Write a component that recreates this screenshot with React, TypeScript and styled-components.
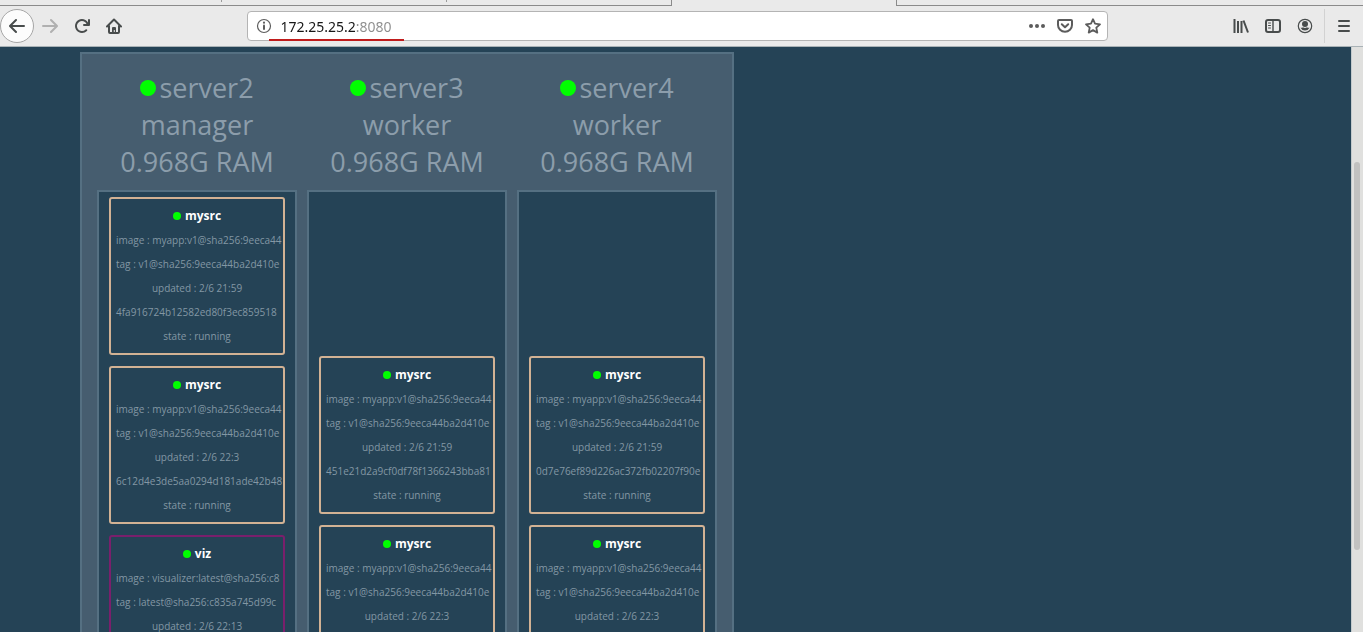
import React from 'react';
import styled, { createGlobalStyle } from 'styled-components';

const GlobalStyle = createGlobalStyle`
  *, *::before, *::after { box-sizing: border-box; }
  body { margin: 0; font-family: "Open Sans", "Noto Sans", sans-serif; }
`;

const Window = styled.div`
  display: flex;
  flex-direction: column;
  height: 100vh;
  overflow: hidden;
  background: #254356;
`;

const TabStrip = styled.div`
  display: flex;
  flex: none;
  height: 6px;
  background: #eaeaea;
`;

const Tab = styled.div<{ $active?: boolean; $last?: boolean }>`
  width: ${p => (p.$last ? 'auto' : p.$active ? '224px' : '225px')};
  flex: ${p => (p.$last ? '1' : 'none')};
  border-bottom: 1px solid ${p => (p.$active ? '#eaeaea' : '#8b8b8b')};
  border-left: ${p => (p.$last ? '1px solid #8b8b8b' : '0')};

  &:first-child { width: 222px; }
  &:nth-child(3) { border-right: 1px solid #8b8b8b; }
`;

const TabDivider = styled.div`
  width: 1px;
  height: 2px;
  margin-left: auto;
  background: #9b9b9b;
`;

const Toolbar = styled.nav`
  display: flex;
  flex: none;
  align-items: center;
  height: 41px;
  background: #eaeaea;
  border-bottom: 1px solid #a9b2b6;
`;

const ButtonGroup = styled.div`
  display: flex;
  flex: none;
  align-items: center;
`;

const ToolButton = styled.button<{ $muted?: boolean; $round?: boolean }>`
  display: flex;
  align-items: center;
  justify-content: center;
  width: ${p => (p.$round ? '34px' : '32px')};
  height: ${p => (p.$round ? '34px' : '32px')};
  padding: 0;
  border: ${p => (p.$round ? '1px solid #a6a6a6' : '0')};
  border-radius: ${p => (p.$round ? '50%' : '3px')};
  background: ${p => (p.$round ? '#fcfcfc' : 'transparent')};
  color: ${p => (p.$muted ? '#b0b0b0' : '#484c4c')};
`;

const Spacer = styled.div`
  flex: 119;
`;

const AddressBar = styled.div`
  position: relative;
  display: flex;
  flex: 861;
  align-items: center;
  height: 30px;
  padding: 0 0 0 8px;
  background: #fff;
  border: 1px solid #b4b4b4;
  border-radius: 4px;
  color: #5c5c5c;
`;

const AddressInput = styled.input`
  flex: 1;
  min-width: 0;
  height: 24px;
  margin-left: 8px;
  padding: 0;
  border: 0;
  outline: 0;
  font: 14px "Noto Sans", "Open Sans", sans-serif;
  color: transparent;
  background: linear-gradient(to right, #161616 76px, #8c8c8c 76px);
  background-clip: text;
  -webkit-background-clip: text;
`;

const AddressMark = styled.div`
  position: absolute;
  left: 21px;
  bottom: -1px;
  width: 135px;
  height: 2px;
  background: #c01c1c;
`;

const AddressButton = styled(ToolButton)`
  width: 28px;
  height: 28px;
  color: #5c5c5c;
`;

const InfoButton = styled(AddressButton)`
  width: 16px;
`;

const Divider = styled.div`
  width: 1px;
  height: 34px;
  margin: 0 3px;
  background: #d2d2d2;
`;

const MenuGroup = styled(ButtonGroup)`
  padding-right: 3px;
`;

const Viewport = styled.div`
  display: flex;
  flex: 1;
  min-height: 0;
`;

const Page = styled.main`
  flex: 1;
  min-width: 0;
  overflow: hidden;
  padding: 5px 80px 0;
`;

const ScrollTrack = styled.div`
  flex: none;
  width: 12px;
  padding: 0 3px 0 2px;
  background: #e0e0de;
  border-left: 1px solid #c3cacc;
  display: flex;
  flex-direction: column;
`;

const ScrollSpace = styled.div<{ $share: number }>`
  flex: ${p => p.$share};
`;

const ScrollThumb = styled.div`
  flex: 388;
  width: 6px;
  border-radius: 3px;
  background: #c1c1c0;
`;

const Cluster = styled.section`
  display: flex;
  gap: 10px;
  width: fit-content;
  padding: 15px;
  background: #465d6f;
  border: 2px solid #557082;
`;

const Node = styled.article`
  display: flex;
  flex-direction: column;
  width: 200px;
`;

const NodeHeader = styled.header`
  margin-bottom: 10px;
  text-align: center;
  font-size: 27px;
  line-height: 37px;
  color: #8c9dab;
`;

const NodeLine = styled.div`
  display: flex;
  align-items: center;
  justify-content: center;
  gap: 3px;
`;

const Dot = styled.span<{ $size: number }>`
  flex: none;
  width: ${p => p.$size}px;
  height: ${p => p.$size}px;
  border-radius: 50%;
  background: #00ff00;
`;

const TaskList = styled.div`
  display: flex;
  flex: 1;
  flex-direction: column;
  justify-content: flex-end;
  gap: 11px;
  padding: 5px 10px;
  background: #254356;
  border: 2px solid #557082;
`;

const Task = styled.div<{ $viz: boolean }>`
  height: ${p => (p.$viz ? '148px' : '158px')};
  padding: 7px;
  overflow: hidden;
  border-radius: 3px;
  box-shadow: inset 0 0 0 2px ${p => (p.$viz ? '#7a1f6c' : '#d2b294')};
  font-size: 10px;
  line-height: 24px;
  text-align: center;
  white-space: nowrap;
  color: #8397a4;
`;

const TaskName = styled.div`
  display: flex;
  align-items: center;
  justify-content: center;
  gap: 4px;
  font-size: 12px;
  font-weight: 700;
  color: #fff;
`;

const LongLine = styled.div`
  text-align: left;
`;

type TaskInfo = {
  name: string;
  image: string;
  tag: string;
  updated: string;
  id: string;
};

const mysrc = (updated: string, id: string): TaskInfo => ({
  name: 'mysrc',
  image: 'myapp:v1@sha256:9eeca44',
  tag: 'v1@sha256:9eeca44ba2d410e',
  updated,
  id,
});

const nodes: { name: string; role: string; tasks: TaskInfo[] }[] = [
  {
    name: 'server2',
    role: 'manager',
    tasks: [
      mysrc('2/6 21:59', '4fa916724b12582ed80f3ec859518'),
      mysrc('2/6 22:3', '6c12d4e3de5aa0294d181ade42b48'),
      {
        name: 'viz',
        image: 'visualizer:latest@sha256:c8',
        tag: 'latest@sha256:c835a745d99c',
        updated: '2/6 22:13',
        id: '',
      },
    ],
  },
  {
    name: 'server3',
    role: 'worker',
    tasks: [
      mysrc('2/6 21:59', '451e21d2a9cf0df78f1366243bba81'),
      mysrc('2/6 22:3', ''),
    ],
  },
  {
    name: 'server4',
    role: 'worker',
    tasks: [
      mysrc('2/6 21:59', '0d7e76ef89d226ac372fb02207f90e'),
      mysrc('2/6 22:3', ''),
    ],
  },
];

const Icon = ({ children }: { children: React.ReactNode }) => (
  <svg width="16" height="16" viewBox="0 0 16 16" fill="none" stroke="currentColor" strokeWidth="2" strokeLinecap="round" strokeLinejoin="round" aria-hidden="true">
    {children}
  </svg>
);

export default function App() {
  return (
    <>
      <GlobalStyle />
      <Window>
        <TabStrip>
          <Tab><TabDivider /></Tab>
          <Tab><TabDivider /></Tab>
          <Tab />
          <Tab $active />
          <Tab $last />
        </TabStrip>
        <Toolbar>
          <ButtonGroup>
            <ToolButton $round aria-label="Back">
              <Icon><path d="M15 8H1.5M7 2L1 8l6 6" /></Icon>
            </ToolButton>
            <ToolButton $muted aria-label="Forward">
              <Icon><path d="M1 8h13.500M9 2l6 6-6 6" /></Icon>
            </ToolButton>
            <ToolButton aria-label="Reload">
              <Icon>
                <path fill="currentColor" stroke="none" d="M15 1a1 1 0 0 0-1 1v2.418A6.995 6.995 0 1 0 8 15a6.954 6.954 0 0 0 4.95-2.05 1 1 0 0 0-1.414-1.414A5.019 5.019 0 1 1 12.549 6H10a1 1 0 0 0 0 2h5a1 1 0 0 0 1-1V2a1 1 0 0 0-1-1z" />
              </Icon>
            </ToolButton>
            <ToolButton aria-label="Home">
              <Icon>
                <path d="M1 8.500L8 1.500l7 7M3 8v6a1 1 0 0 0 1 1h8a1 1 0 0 0 1-1V8" />
                <path fill="currentColor" stroke="none" d="M6 14.500V10a1 1 0 0 1 1-1h2a1 1 0 0 1 1 1v4.500H8.800V12H7.800v2.500z" />
              </Icon>
            </ToolButton>
          </ButtonGroup>
          <Spacer />
          <AddressBar>
            <InfoButton aria-label="Site information">
              <Icon>
                <circle cx="8" cy="8" r="6.500" strokeWidth="1.200" />
                <path d="M8 7.500v3.500" />
                <circle cx="8" cy="4.700" r="1.100" fill="currentColor" stroke="none" />
              </Icon>
            </InfoButton>
            <AddressInput aria-label="Address" defaultValue="172.25.25.2:8080" />
            <AddressButton aria-label="Page actions">
              <Icon>
                <g fill="currentColor" stroke="none">
                  <circle cx="2" cy="8" r="2" /><circle cx="8" cy="8" r="2" /><circle cx="14" cy="8" r="2" />
                </g>
              </Icon>
            </AddressButton>
            <AddressButton aria-label="Save to Pocket">
              <Icon>
                <path d="M2 2h12a1 1 0 0 1 1 1v4a7 6.800 0 0 1-14 0V3a1 1 0 0 1 1-1z" />
                <path d="M4.800 6.300L8 9.300l3.200-3" />
              </Icon>
            </AddressButton>
            <AddressButton aria-label="Bookmark this page">
              <Icon>
                <path strokeWidth="1.800" d="M8 1.200l2 4.500 5 .6-3.700 3.300 1 5L8 12.100l-4.300 2.500 1-5L1 6.300l5-.6z" />
              </Icon>
            </AddressButton>
            <AddressMark />
          </AddressBar>
          <Spacer />
          <MenuGroup>
            <ToolButton aria-label="Library">
              <Icon><path strokeLinecap="butt" d="M1.500 1v14M5 3v12M8.500 3v12M10.500 2.500l4.500 12" /></Icon>
            </ToolButton>
            <ToolButton aria-label="Sidebars">
              <Icon>
                <rect x="1" y="2" width="14" height="12" rx="2" />
                <path strokeWidth="1.400" d="M8 2v12" />
                <path strokeWidth="1" d="M3.500 5h2M3.500 7.500h2M3.500 10h2" />
              </Icon>
            </ToolButton>
            <ToolButton aria-label="Account">
              <Icon>
                <circle cx="8" cy="8" r="6.700" strokeWidth="1.200" />
                <circle cx="8" cy="6" r="3" fill="currentColor" stroke="none" />
                <path fill="currentColor" stroke="none" d="M3.500 9.800c1 .2 2-.1 2.500-.5a4 4 0 0 0 4 0c.5.400 1.500.7 2.500.5a5 5 0 0 1-9 0z" />
              </Icon>
            </ToolButton>
            <Divider />
            <ToolButton aria-label="Open menu">
              <Icon><path d="M3 3h10M3 8h10M3 13h10" /></Icon>
            </ToolButton>
          </MenuGroup>
        </Toolbar>
        <Viewport>
          <Page>
            <Cluster>
              {nodes.map(node => (
                <Node key={node.name}>
                  <NodeHeader>
                    <NodeLine><Dot $size={16} />{node.name}</NodeLine>
                    <div>{node.role}</div>
                    <div>0.968G RAM</div>
                  </NodeHeader>
                  <TaskList>
                    {node.tasks.map(task => (
                      <Task key={task.updated} $viz={task.name === 'viz'}>
                        <TaskName><Dot $size={8} />{task.name}</TaskName>
                        <LongLine>image : {task.image}</LongLine>
                        <LongLine>tag : {task.tag}</LongLine>
                        <div>updated : {task.updated}</div>
                        {task.id && <LongLine>{task.id}</LongLine>}
                        <div>state : running</div>
                      </Task>
                    ))}
                  </TaskList>
                </Node>
              ))}
            </Cluster>
          </Page>
          <ScrollTrack>
            <ScrollSpace $share={115} />
            <ScrollThumb />
            <ScrollSpace $share={82} />
          </ScrollTrack>
        </Viewport>
      </Window>
    </>
  );
}
